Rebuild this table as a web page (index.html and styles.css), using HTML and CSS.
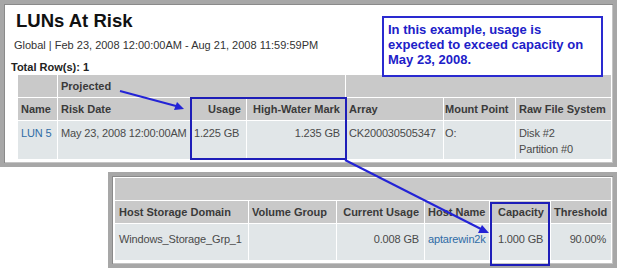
FILE: index.html
```html
<!DOCTYPE html>
<html lang="en">
<head>
  <meta charset="UTF-8">
  <title>LUNs At Risk</title>
  <link rel="stylesheet" href="styles.css">
</head>
<body>
  <div class="page">
    <div class="panel panel-main">
      <h1 class="title">LUNs At Risk</h1>
      <div class="scope">Global | Feb 23, 2008 12:00:00AM - Aug 21, 2008 11:59:59PM</div>
      <div class="total">Total Row(s): 1</div>
      <table class="grid grid-luns">
        <colgroup>
          <col style="width:39px"><col style="width:132px"><col style="width:55px"><col style="width:98px">
          <col style="width:97px"><col style="width:71px"><col style="width:95px">
        </colgroup>
        <tr class="head">
          <th></th>
          <th colspan="3">Projected</th>
          <th colspan="3"></th>
        </tr>
        <tr class="head">
          <th>Name</th>
          <th>Risk Date</th>
          <th class="num">Usage</th>
          <th class="num">High-Water Mark</th>
          <th>Array</th>
          <th class="tight">Mount Point</th>
          <th>Raw File System</th>
        </tr>
        <tr class="row">
          <td><a href="#">LUN 5</a></td>
          <td>May 23, 2008 12:00:00AM</td>
          <td>1.225 GB</td>
          <td class="num">1.235 GB</td>
          <td>CK200030505347</td>
          <td class="tight">O:</td>
          <td>Disk #2<br>Partition #0</td>
        </tr>
      </table>
    </div>

    <div class="panel panel-host">
      <table class="grid grid-host">
        <colgroup>
          <col style="width:133px"><col style="width:87px"><col style="width:87px">
          <col style="width:64px"><col style="width:60px"><col style="width:60px">
        </colgroup>
        <tr class="head">
          <th colspan="6"></th>
        </tr>
        <tr class="head">
          <th class="wide">Host Storage Domain</th>
          <th>Volume Group</th>
          <th class="num">Current Usage</th>
          <th>Host Name</th>
          <th class="cap">Capacity</th>
          <th class="num">Threshold</th>
        </tr>
        <tr class="row">
          <td class="wide">Windows_Storage_Grp_1</td>
          <td></td>
          <td class="num">0.008 GB</td>
          <td><a href="#">aptarewin2k</a></td>
          <td class="cap">1.000 GB</td>
          <td class="num">90.00%</td>
        </tr>
      </table>
    </div>

    <div class="note">In this example, usage is<br>expected to exceed capacity on<br>May 23, 2008.</div>
    <div class="mark mark-usage"></div>
    <div class="mark mark-capacity"></div>

    <svg class="arrows" width="620" height="271" viewBox="0 0 620 271">
      <g stroke="#2323d6" stroke-width="2" fill="#2323d6">
        <line x1="120" y1="91" x2="176" y2="106"/>
        <polygon points="184,109 174,110 177,102" stroke="none"/>
        <line x1="345" y1="160" x2="481" y2="229"/>
        <polygon points="489,233 478,233 482,225" stroke="none"/>
      </g>
    </svg>
  </div>
</body>
</html>
```

FILE: styles.css
```css
body {
  margin: 0;
  background: #fff;
  font-family: "Liberation Sans", Arial, sans-serif;
  color: #4a4a4a;
}

.page {
  position: relative;
  width: 620px;
  height: 271px;
}

.panel {
  border: 4px solid #a7a7a7;
  box-shadow: inset 1px 1px 0 #8a8a8a, inset -1px -1px 0 #c4c4c4;
  background: #fff;
}

.panel-main {
  width: 603px;
  padding: 6px 0 3px 6px;
}

.panel-host {
  margin: 5px 0 0 108px;
  padding: 1px 0 3px 2px;
  width: 499px;
}

.title {
  margin: 0 0 0 6px;
  font-size: 18.5px;
  line-height: 21px;
  font-weight: bold;
  color: #111;
}

.scope {
  margin: 8px 0 0 4px;
  font-size: 11px;
  line-height: 13px;
  color: #333;
}

.total {
  margin: 9px 0 0 1px;
  font-size: 11px;
  line-height: 13px;
  font-weight: bold;
  color: #222;
}

.grid {
  table-layout: fixed;
  border-collapse: separate;
  border-spacing: 1px;
  font-size: 11px;
  letter-spacing: -0.15px;
}

.grid-luns {
  width: 595px;
  margin-left: 7px;
}

.grid-host {
  width: 498px;
}

.grid th,
.grid td {
  padding: 0 3px;
  text-align: left;
  white-space: nowrap;
  overflow: hidden;
}

.grid .head th {
  height: 22px;
  background: #c9c9c9;
  color: #3a3a3a;
  font-weight: bold;
  letter-spacing: 0;
  vertical-align: middle;
}

.grid .row td {
  background: #e1e6e8;
  line-height: 16px;
  vertical-align: top;
}

.grid-luns .row td {
  height: 34px;
  padding-top: 4px;
}

.grid-host .row td {
  height: 29px;
  padding-top: 7px;
}

.grid .num {
  text-align: right;
  padding-right: 5px;
}

.grid .tight {
  padding-left: 1px;
}

.grid .wide {
  padding-left: 4px;
}

.grid .cap {
  padding-left: 8px;
}

.grid a {
  color: #2f6ca6;
  text-decoration: none;
}

.note {
  position: absolute;
  left: 382px;
  top: 16px;
  width: 209px;
  height: 53px;
  padding: 4px 4px 0 4px;
  border: 2px solid #2a2ad0;
  background: #fff;
  color: #2020c8;
  font-size: 13px;
  line-height: 15px;
  font-weight: bold;
  white-space: nowrap;
}

.mark {
  position: absolute;
  border: 2px solid #1e1eb8;
  box-sizing: border-box;
}

.mark-usage {
  left: 190px;
  top: 97px;
  width: 157px;
  height: 63px;
}

.mark-capacity {
  left: 490px;
  top: 202px;
  width: 60px;
  height: 64px;
}

.arrows {
  position: absolute;
  left: 0;
  top: 0;
  pointer-events: none;
}
```
